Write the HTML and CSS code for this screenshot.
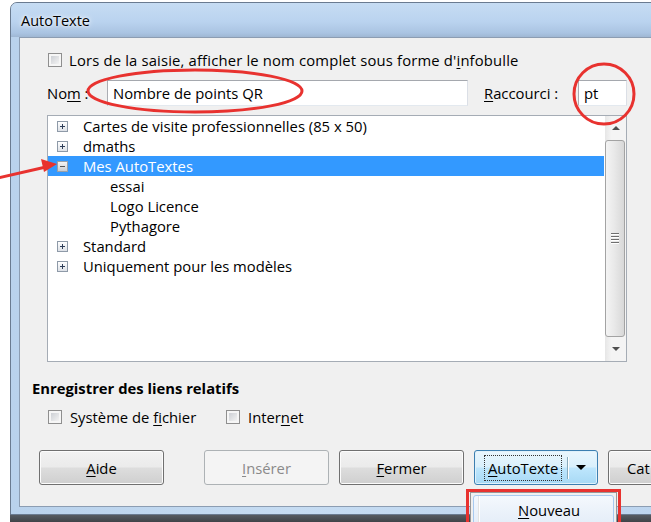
FILE: index.html
```html
<!DOCTYPE html>
<html lang="fr">
<head>
<meta charset="utf-8">
<title>AutoTexte</title>
<link rel="stylesheet" href="styles.css">
</head>
<body>
<div class="desktop">
  <div class="shadow"></div>
  <div class="window">
    <div class="titlebar"><span class="title">AutoTexte</span></div>
    <div class="client">
      <div class="upper">
        <label class="check-row top-check">
          <span class="cb"></span>
          <span class="lbl wide">Lors de la saisie, afficher le nom complet sous forme d'<u>i</u>nfobulle</span>
        </label>
        <div class="name-row">
          <span class="name-lbl">No<u>m</u> :</span>
          <div class="field name-field">Nombre de points QR</div>
          <span class="short-lbl"><u>R</u>accourci :</span>
          <div class="field short-field">pt</div>
        </div>
        <div class="tree">
          <div class="tree-list">
            <div class="node"><span class="exp plus"></span><span class="txt">Cartes de visite professionnelles (85 x 50)</span></div>
            <div class="node"><span class="exp plus"></span><span class="txt">dmaths</span></div>
            <div class="node sel"><span class="exp minus"></span><span class="txt">Mes AutoTextes</span></div>
            <div class="node leaf"><span class="txt">essai</span></div>
            <div class="node leaf"><span class="txt">Logo Licence</span></div>
            <div class="node leaf"><span class="txt">Pythagore</span></div>
            <div class="node"><span class="exp plus"></span><span class="txt">Standard</span></div>
            <div class="node"><span class="exp plus"></span><span class="txt">Uniquement pour les modèles</span></div>
          </div>
          <div class="vscroll">
            <div class="sarrow"><span class="tri-up"></span></div>
            <div class="thumb"><span class="grip"></span><span class="grip"></span><span class="grip"></span><span class="grip"></span></div>
            <div class="sarrow"><span class="tri-down"></span></div>
          </div>
        </div>
      </div>
      <div class="lower">
        <div class="group-title">Enregistrer des liens relatifs</div>
        <div class="opts">
          <label class="check-row opt-first"><span class="cb"></span><span class="lbl">Système de <u>f</u>ichier</span></label>
          <label class="check-row"><span class="cb"></span><span class="lbl">Inter<u>n</u>et</span></label>
        </div>
        <div class="buttons">
          <button class="btn help"><u>A</u>ide</button>
          <button class="btn disabled"><u>I</u>nsérer</button>
          <button class="btn"><u>F</u>ermer</button>
          <button class="btn split"><span class="focus"><u>A</u>utoTexte</span><span class="sep"></span><span class="tri-down big"></span></button>
          <button class="btn cat">Cat</button>
        </div>
      </div>
    </div>
  </div>
  <div class="menu">
    <div class="menu-item"><span class="gutter"></span><span class="mtext"><u>N</u>ouveau</span></div>
  </div>
  <svg class="marks" width="651" height="522" viewBox="0 0 651 522">
    <ellipse cx="195" cy="91" rx="107" ry="21" fill="none" stroke="#e8322f" stroke-width="3"/>
    <ellipse cx="604" cy="94" rx="30" ry="30" fill="none" stroke="#e8322f" stroke-width="3"/>
    <line x1="-2" y1="178" x2="46" y2="167" stroke="#e8322f" stroke-width="3"/>
    <polygon points="57,164 41,159 44,172" fill="#e8322f"/>
    <rect x="467.5" y="490.5" width="152" height="40" fill="none" stroke="#e8322f" stroke-width="3"/>
  </svg>
</div>
</body>
</html>
```
FILE: styles.css
```css
* { box-sizing: border-box; }
html, body { margin: 0; padding: 0; }
body {
  width: 651px;
  height: 522px;
  overflow: hidden;
  background: #ffffff;
  font-family: "Open Sans", "Noto Sans", sans-serif;
  font-size: 14.8px;
  color: #000;
}
u { text-decoration-thickness: 1px; text-underline-offset: 2px; }
.desktop { position: relative; width: 651px; height: 522px; }
.shadow {
  position: absolute; left: 10px; top: 514px; width: 700px; height: 8px;
  background: linear-gradient(#5a5f66, #3f4348);
}
.window {
  position: absolute; left: 10px; top: 2px;
  width: 700px; height: 513px;
  border: 1px solid #6a7b90;
  border-radius: 7px 7px 0 0;
  background: linear-gradient(90deg, #b9d2ec, #c6dcf2 40%, #bcd4ee);
  padding: 0 0 7px 8px;
  display: flex; flex-direction: column;
}
.titlebar {
  height: 34px;
  display: flex; align-items: center;
  background: linear-gradient(#c6dcf3 0%, #bad3ef 55%, #aac4e2 88%, #9fb7d3 100%);
  margin-left: -8px; padding-left: 10px;
  border-radius: 6px 6px 0 0;
}
.title { font-size: 14.5px; color: #000; text-shadow: 0 0 6px #fff, 0 0 3px #fff; }
.client {
  flex: 1;
  background: #f0f0f0;
  border: 1px solid #8c9db2;
  border-right: none;
  display: flex; flex-direction: column;
}
.upper { padding: 14px 0 0 27px; display: flex; flex-direction: column; }
.check-row { display: flex; align-items: center; height: 16px; }
.check-row .lbl { margin-left: 7px; white-space: nowrap; }
.check-row .wide { letter-spacing: 0.17px; }
.cb {
  width: 14px; height: 14px; flex: none;
  border: 1px solid #8f8f8f;
  background: #f6f6f6;
  display: inline-block;
  position: relative;
}
.cb::after {
  content: ""; position: absolute; left: 2px; top: 2px; right: 2px; bottom: 2px;
  background: linear-gradient(135deg, #cdd0d5, #f3f3f3);
}
.top-check { margin-left: 1px; }
.name-row { display: flex; align-items: center; margin-top: 12px; height: 26px; }
.name-lbl { width: 60px; flex: none; }
.field {
  height: 26px; background: #fff;
  border: 1px solid #abadb3; border-top-color: #a5a8ae;
  border-bottom-color: #e3e9ef; border-right-color: #dbdfe6;
  display: flex; align-items: center; padding-left: 5px;
  white-space: nowrap;
}
.name-field { width: 361px; }
.short-lbl { margin-left: 16px; width: 94px; flex: none; white-space: nowrap; }
.short-field { width: 49px; }
.tree {
  margin-top: 9px;
  width: 580px; height: 247px;
  border: 1px solid #a5acb5;
  background: #fff;
  display: flex;
}
.tree-list { flex: 1; padding-top: 0; }
.node { height: 20px; display: flex; align-items: center; padding-left: 9px; white-space: nowrap; }
.node .txt { margin-left: 15px; }
.node.leaf { padding-left: 62px; }
.node.leaf .txt { margin-left: 0; }
.node.sel { background: #3399ff; color: #fff; margin-right: 1px; }
.exp {
  width: 11px; height: 11px; flex: none;
  border: 1px solid #8e9aa8;
  background: linear-gradient(#ffffff, #dde1e7);
  position: relative;
}
.exp::before {
  content: ""; position: absolute; left: 2px; top: 4px; width: 5px; height: 1px; background: #2f3e58;
}
.plus::after {
  content: ""; position: absolute; left: 4px; top: 2px; width: 1px; height: 5px; background: #2f3e58;
}
.sel .exp { background: linear-gradient(#f4f4f4, #c9ccd1); border-color: #9aa0a8; }
.sel .exp::before { background: #555; }
.vscroll {
  width: 21px; flex: none;
  background: linear-gradient(90deg, #e6e6e6, #f4f4f4 30%, #f4f4f4);
  display: flex; flex-direction: column;
}
.sarrow { height: 24px; display: flex; align-items: center; justify-content: center; flex: none; }
.tri-up { width: 0; height: 0; border-left: 4px solid transparent; border-right: 4px solid transparent; border-bottom: 4px solid #4f4f4f; }
.tri-down { width: 0; height: 0; border-left: 4px solid transparent; border-right: 4px solid transparent; border-top: 4px solid #4f4f4f; }
.thumb {
  flex: 1; margin: 0 1px 0 0;
  border: 1px solid #a3a3a3; border-radius: 3px;
  background: linear-gradient(90deg, #f4f4f4, #e9e9e9 45%, #d8d8d8);
  display: flex; flex-direction: column; align-items: center; justify-content: center; gap: 1px;
}
.grip { width: 8px; height: 2px; border-top: 1px solid #6f6f6f; border-bottom: 1px solid #fff; }
.lower { display: flex; flex-direction: column; padding-left: 12px; }
.group-title { font-weight: bold; margin-top: 16px; height: 20px; display: flex; align-items: center; }
.opts { display: flex; margin-top: 9px; padding-left: 16px; height: 20px; align-items: center; }
.opt-first { width: 178px; }
.opts .lbl { margin-left: 8px; }
.buttons { display: flex; margin-top: 23px; padding-left: 7px; gap: 10px; }
.btn {
  width: 125px; height: 35px; flex: none;
  font: inherit; color: #000;
  border: 1px solid #707070; border-radius: 3px;
  background: linear-gradient(#f2f2f2 0%, #ebebeb 48%, #dddddd 52%, #cfcfcf 100%);
  box-shadow: inset 0 0 0 1px #fcfcfc;
  display: flex; align-items: center; justify-content: center;
  padding: 0;
}
.help { margin-right: 30px; }
.disabled { color: #8a8a8a; border-color: #adb2b5; background: #f4f4f4; box-shadow: none; }
.split {
  width: 124px;
  border-color: #3c7fb1;
  background: linear-gradient(#eaf6fd 0%, #d9f0fc 48%, #bee6fd 52%, #a7d9f5 100%);
  box-shadow: inset 0 0 0 1px #dff1fb;
  justify-content: flex-start; padding-left: 12px;
}
.focus { outline: 1px dotted #333; outline-offset: 2px; padding: 0 1px; }
.sep { width: 2px; height: 22px; background: #fff; border-left: 1px solid #8ab; margin-left: 8px; flex: none; }
.tri-down.big { border-left-width: 5px; border-right-width: 5px; border-top-width: 5px; border-top-color: #000; margin-left: 7px; }
.cat { justify-content: flex-start; padding-left: 18px; }
.menu {
  position: absolute; left: 470px; top: 492px; width: 147px; height: 32px;
  background: #f0f0f0;
  border: 1px solid #979797; border-bottom: none;
  padding: 2px 2px 0 2px;
}
.menu-item {
  height: 30px; display: flex; align-items: center;
  border: 1px solid #a8caf0; border-radius: 3px;
  background: linear-gradient(#f4f8fd, #e4edf8);
}
.gutter { width: 1px; align-self: stretch; margin-left: 4px; background: #e2e3e3; box-shadow: 1px 0 0 #fff; }
.mtext { margin-left: 39px; }
.marks { position: absolute; left: 0; top: 0; pointer-events: none; }
```
